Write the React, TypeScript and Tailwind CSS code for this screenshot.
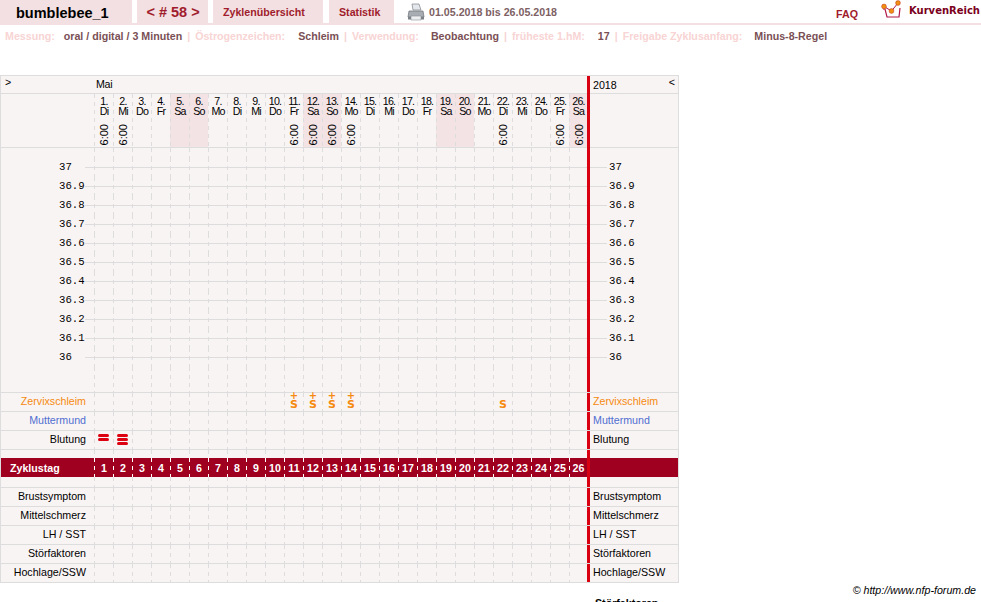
const days = [
  ["1.", "Di"], ["2.", "Mi"], ["3.", "Do"], ["4.", "Fr"], ["5.", "Sa"], ["6.", "So"], ["7.", "Mo"],
  ["8.", "Di"], ["9.", "Mi"], ["10.", "Do"], ["11.", "Fr"], ["12.", "Sa"], ["13.", "So"], ["14.", "Mo"],
  ["15.", "Di"], ["16.", "Mi"], ["17.", "Do"], ["18.", "Fr"], ["19.", "Sa"], ["20.", "So"], ["21.", "Mo"],
  ["22.", "Di"], ["23.", "Mi"], ["24.", "Do"], ["25.", "Fr"], ["26.", "Sa"],
];
const measured = [1, 2, 11, 12, 13, 14, 22, 25, 26];
const temps = ["37", "36.9", "36.8", "36.7", "36.6", "36.5", "36.4", "36.3", "36.2", "36.1", "36"];
const meta = [
  ["Messung:", "oral / digital / 3 Minuten", "ml-[9px]"],
  ["Östrogenzeichen:", "Schleim", "ml-[13px]"],
  ["Verwendung:", "Beobachtung", "ml-[12px]"],
  ["früheste 1.hM:", "17", "ml-[13px]"],
  ["Freigabe Zyklusanfang:", "Minus-8-Regel", "ml-[12px]"],
];

const Printer = () => (
  <svg width="18" height="18" viewBox="0 0 18 18">
    <path d="M5 1h7l2 6H6z" fill="#e4e8ec" stroke="#8a9098" strokeWidth="0.8" />
    <path d="M2 8h14l1 6H1z" fill="#a8adb3" stroke="#74797f" strokeWidth="0.8" />
    <path d="M1 14h16v2.5H1z" fill="#7c8187" />
    <path d="M4 13h10v4H4z" fill="#eceef0" stroke="#8a9098" strokeWidth="0.6" />
  </svg>
);

const Logo = () => (
  <svg width="23" height="20" viewBox="0 0 23 20">
    <path d="M2 9h2l2 8h12l1-9" fill="none" stroke="#b01848" strokeWidth="1.2" />
    <path d="M3 6.5l7.5 4.5 6.5-8" fill="none" stroke="#b01848" strokeWidth="1" />
    <circle cx="3" cy="6.5" r="2.4" fill="#f09010" stroke="#c03020" strokeWidth="0.5" />
    <circle cx="10.5" cy="11" r="2.4" fill="#f09010" stroke="#c03020" strokeWidth="0.5" />
    <circle cx="17" cy="3" r="2.4" fill="#f09010" stroke="#c03020" strokeWidth="0.5" />
  </svg>
);

const Cells = ({ white = false, children }: { white?: boolean; children?: (day: number) => React.ReactNode }) => (
  <div className="flex h-full">
    {days.map((_, i) => (
      <div
        key={i}
        className={
          (i === 25 ? "w-[18px] " : "w-[19px] ") +
          (white
            ? "bg-[linear-gradient(#ffffff_50%,transparent_0)] "
            : "bg-[linear-gradient(#dddddd_50%,transparent_0)] ") +
          "bg-[length:1px_8px] bg-repeat-y h-full flex flex-col items-center justify-center"
        }
      >
        {children && children(i + 1)}
      </div>
    ))}
  </div>
);

const RedBar = () => <div className="w-[3px] h-full bg-[#d90012]" />;

const Row = ({ label, color = "text-black", children }: { label: string; color?: string; children?: (day: number) => React.ReactNode }) => (
  <div className="flex h-[19px] border-b border-[#dddddd]">
    <div className={"w-[93px] pr-[8px] text-right leading-[17px] " + color}>{label}</div>
    <Cells>{children}</Cells>
    <RedBar />
    <div className={"pl-[3px] leading-[17px] " + color}>{label}</div>
  </div>
);

const TempRow = ({ t }: { t: string }) => (
  <div className="flex h-[19px]">
    <div className="w-[93px] flex items-center">
      <span className="w-[84px] pl-[58px] font-['Liberation_Mono'] text-[10.67px] leading-[19px]">{t}</span>
      <div className="flex-1 h-px bg-[#dddddd]" />
    </div>
    <div className="relative">
      <div className="absolute left-0 right-0 top-[9px] h-px bg-[#dddddd]" />
      <Cells />
    </div>
    <RedBar />
    <div className="flex items-center">
      <div className="w-[17px] h-px bg-[#dddddd]" />
      <span className="pl-[2px] font-['Liberation_Mono'] text-[10.67px] leading-[19px]">{t}</span>
    </div>
  </div>
);

const Mucus = ({ plus }: { plus?: boolean }) => (
  <div className="flex h-full flex-col items-center pl-[1px] font-['DejaVu_Sans'] text-[#f58a10]">
    <span className="h-[6px] text-[10px] font-bold leading-[6px]">{plus ? "+" : ""}</span>
    <span className="pt-[1px] text-[11px] font-bold leading-[10px]">S</span>
  </div>
);

const Bleeding = ({ count }: { count: number }) => (
  <div className="flex h-full flex-col gap-px pt-[3px]">
    {Array.from({ length: count }).map((_, i) => (
      <div key={i} className="h-[3px] w-[11px] rounded-full bg-[#dd0010]" />
    ))}
  </div>
);

export default function App() {
  return (
    <div className="h-[602px] overflow-hidden bg-white font-['Liberation_Sans',sans-serif] text-[10.67px] text-black">
      {/* top bar */}
      <div className="flex h-[25px] border-b-2 border-[#f3e0e2]">
        <div className="w-[132px] bg-[#f3e0e2] pl-[16px] text-[14.5px] font-bold leading-[26px]">bumblebee_1</div>
        <div className="ml-[5px] w-[71px] bg-[#f3e0e2] pl-[1px] text-center text-[14.5px] font-bold leading-[25px] text-[#a01c2c]">&lt; # 58 &gt;</div>
        <div className="ml-[5px] w-[110px] bg-[#f3e0e2] pl-[10px] font-bold leading-[24px] text-[#a01c2c]">Zyklenübersicht</div>
        <div className="ml-[6px] w-[65px] bg-[#f3e0e2] pl-[10px] font-bold leading-[24px] text-[#a01c2c]">Statistik</div>
        <div className="ml-[13px] pt-[3px]"><Printer /></div>
        <div className="ml-[4px] font-bold leading-[24px] text-[#7d5f64]">01.05.2018 bis 26.05.2018</div>
        <div className="ml-auto flex">
          <div className="font-bold leading-[28px] text-[#a01c2c]">FAQ</div>
          <div className="ml-[23px]"><Logo /></div>
          <div className="ml-[5px] mr-[1px] font-['DejaVu_Sans'] text-[10px] font-bold leading-[21px] text-[#7a0020]">KurvenReich</div>
        </div>
      </div>

      {/* settings line */}
      <div className="flex h-[50px] pl-[5px] pt-[5px] font-bold leading-[13px]">
        {meta.map(([k, v, gap], i) => (
          <div key={k} className="flex h-[13px]">
            {i > 0 && <span className="mx-[5px] text-[#f8d4d4]">|</span>}
            <span className="text-[#f8d4d4]">{k}</span>
            <span className={gap + " text-[#7a4f55]"}>{v}</span>
          </div>
        ))}
      </div>

      {/* chart table */}
      <div className="w-[679px] border-x border-t border-[#dddddd] bg-[#f9f4f4]">
        <div className="flex h-[18px]">
          <div className="flex w-[586px] border-b border-[#dddddd]">
            <div className="w-[95px] pl-[4px] leading-[13px]">&gt;</div>
            <div className="leading-[17px] tracking-[-0.3px]">Mai</div>
          </div>
          <RedBar />
          <div className="flex flex-1 justify-between border-b border-[#dddddd] pl-[3px] pr-[3px]">
            <span className="leading-[18px]">2018</span>
            <span className="leading-[13px]">&lt;</span>
          </div>
        </div>

        <div className="flex h-[54px]">
          <div className="flex w-[586px] border-b border-[#dddddd]">
            <div className="w-[93px]" />
            <div className="flex">
              {days.map(([d, w], i) => (
                <div
                  key={d}
                  className={
                    (i === 25 ? "w-[18px] " : "w-[19px] ") +
                    (w === "Sa" || w === "So" ? "bg-[#f3e3e5] " : "") +
                    "flex flex-col items-center whitespace-nowrap bg-[linear-gradient(#dddddd_50%,transparent_0)] bg-[length:1px_8px] bg-repeat-y pl-[1px] pt-[2px] leading-[10px] tracking-[-0.8px]"
                  }
                >
                  <span>{d}</span>
                  <span>{w}</span>
                  {measured.includes(i + 1) && (
                    <span className="mt-auto mb-[2px] rotate-180 text-[11px] tracking-normal [writing-mode:vertical-rl]">6:00</span>
                  )}
                </div>
              ))}
            </div>
          </div>
          <RedBar />
          <div className="flex-1 border-b border-[#dddddd]" />
        </div>

        <div className="border-b border-[#dddddd]">
          <div className="flex h-[10px]">
            <div className="w-[93px]" />
            <Cells />
            <RedBar />
          </div>
          {temps.map((t) => (
            <TempRow key={t} t={t} />
          ))}
          <div className="flex h-[25px]">
            <div className="w-[93px]" />
            <Cells />
            <RedBar />
          </div>
        </div>

        <Row label="Zervixschleim" color="text-[#f58a10]">
          {(d) => (d >= 11 && d <= 14 ? <Mucus plus /> : d === 22 ? <Mucus /> : null)}
        </Row>
        <Row label="Muttermund" color="text-[#4f6fd0]" />
        <Row label="Blutung">
          {(d) => (d === 1 ? <Bleeding count={2} /> : d === 2 ? <Bleeding count={3} /> : null)}
        </Row>

        <div className="flex h-[8px]">
          <div className="w-[93px]" />
          <Cells />
          <RedBar />
        </div>

        <div className="flex h-[19px] bg-[#a00020] font-bold leading-[20px] text-white">
          <div className="w-[93px] pl-[9px]">Zyklustag</div>
          <Cells white>{(d) => <span className="pl-[1px]">{d}</span>}</Cells>
          <RedBar />
        </div>

        <div className="flex h-[11px] border-b border-[#dddddd]">
          <div className="w-[93px]" />
          <Cells />
          <RedBar />
        </div>

        <Row label="Brustsymptom" />
        <Row label="Mittelschmerz" />
        <Row label="LH / SST" />
        <Row label="Störfaktoren" />
        <Row label="Hochlage/SSW" />
      </div>

      <div className="mt-px pr-[5px] text-right italic leading-[13px]">© http://www.nfp-forum.de</div>
      <div className="pl-[595px] font-bold leading-[13px]">Störfaktoren</div>
    </div>
  );
}
